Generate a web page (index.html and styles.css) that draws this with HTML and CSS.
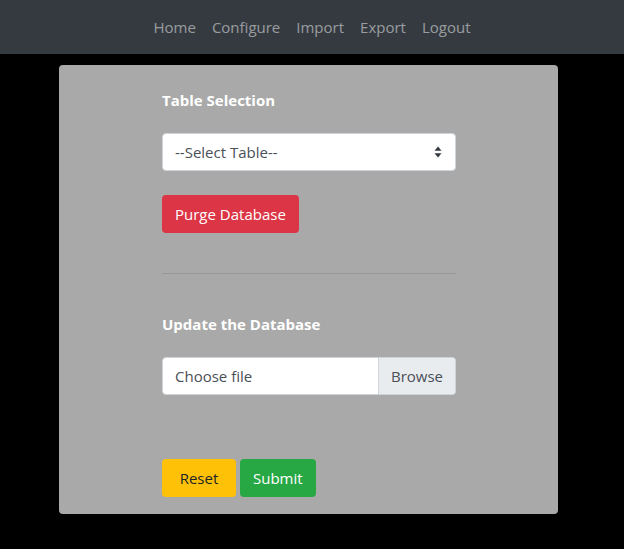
FILE: index.html
```html
<!DOCTYPE html>
<html>
<head>
<meta charset="utf-8">
<link rel="stylesheet" href="styles.css">
</head>
<body>
<nav class="navbar">
  <a class="nav-link" href="#">Home</a>
  <a class="nav-link" href="#">Configure</a>
  <a class="nav-link" href="#">Import</a>
  <a class="nav-link" href="#">Export</a>
  <a class="nav-link" href="#">Logout</a>
</nav>
<main class="card">
  <div class="content">
    <div class="label">Table Selection</div>
    <div class="select">
      <span>--Select Table--</span>
      <svg class="caret" width="8" height="12" viewBox="0 0 8 12"><path d="M4 0.5 L7.5 4.8 H0.5 Z M4 11.5 L7.5 7.2 H0.5 Z" fill="#343a40"/></svg>
    </div>
    <button class="btn btn-danger purge">Purge Database</button>
    <hr class="divider">
    <div class="label">Update the Database</div>
    <div class="file">
      <span class="file-text">Choose file</span>
      <span class="file-browse">Browse</span>
    </div>
    <div class="actions">
      <button class="btn btn-warning reset">Reset</button>
      <button class="btn btn-success">Submit</button>
    </div>
  </div>
</main>
</body>
</html>
```
FILE: styles.css
```css
* { box-sizing: border-box; }
body {
  margin: 0;
  background: #000;
  font-family: "Open Sans", "Noto Sans", sans-serif;
  font-size: 15px;
  line-height: 24px;
  color: #212529;
}
.navbar {
  background: #343a40;
  height: 54px;
  display: flex;
  justify-content: center;
  align-items: center;
}
.nav-link {
  color: rgba(255,255,255,.5);
  text-decoration: none;
  padding: 0 8px;
  font-size: 15px;
}
.card {
  margin: 11px 0 0 59px;
  width: 499px;
  background: #a9a9a9;
  border-radius: 4px;
  padding: 23px 0 17px 103px;
}
.content { width: 294px; }
.label {
  color: #fff;
  font-weight: 700;
  margin-bottom: 21px;
}
.select {
  height: 38px;
  background: #fff;
  border: 1px solid #ced4da;
  border-radius: 4px;
  display: flex;
  align-items: center;
  justify-content: space-between;
  padding: 0 13px 0 12px;
  color: #495057;
}
.btn {
  font-family: inherit;
  font-size: 15px;
  line-height: 24px;
  height: 38px;
  border: 1px solid transparent;
  border-radius: 4px;
  padding: 0 12px;
  cursor: pointer;
}
.btn-danger { background: #dc3545; color: #fff; }
.btn-warning { background: #ffc107; color: #212529; }
.btn-success { background: #28a745; color: #fff; }
.reset { padding: 0 16px; width: 74px; }
.purge { margin-top: 24px; display: block; }
.divider {
  margin: 40px 0 38px;
  border: 0;
  border-top: 1px solid rgba(0,0,0,.1);
}
.file {
  height: 38px;
  display: flex;
  background: #fff;
  border: 1px solid #ced4da;
  border-radius: 4px;
  color: #495057;
  overflow: hidden;
}
.file-text { flex: 1; padding: 0 12px; display: flex; align-items: center; }
.file-browse {
  background: #e9ecef;
  border-left: 1px solid #ced4da;
  padding: 0 12px;
  display: flex;
  align-items: center;
}
.actions {
  margin-top: 64px;
  display: flex;
  gap: 4px;
}
```
